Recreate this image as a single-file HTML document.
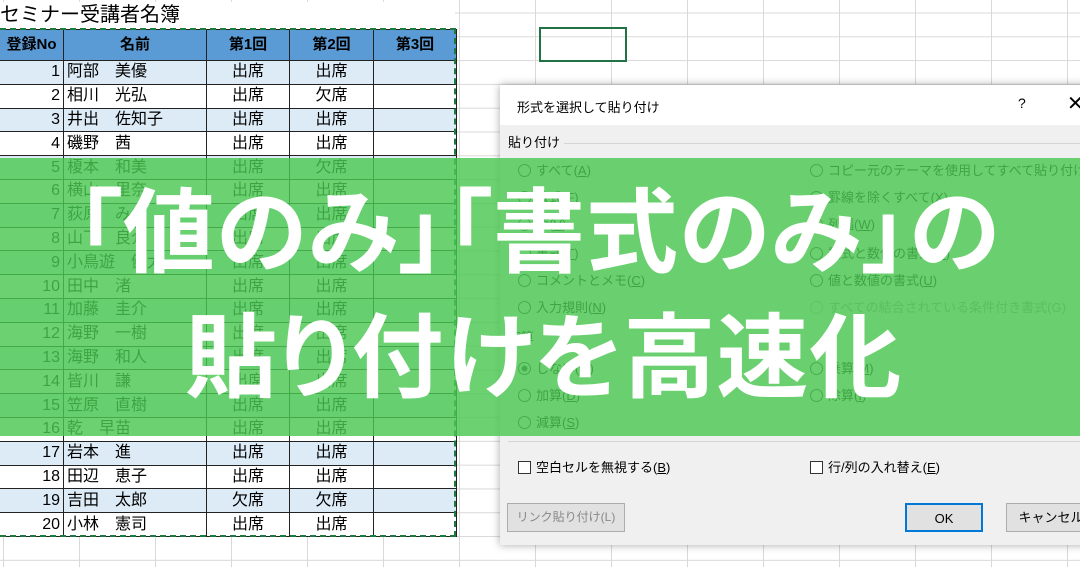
<!DOCTYPE html>
<html><head><meta charset="utf-8"><style>
*{margin:0;padding:0;box-sizing:border-box}
body{width:1080px;height:567px;overflow:hidden;background:#fff;position:relative;font-family:"Liberation Sans","Noto Sans CJK JP",sans-serif}
.grid{position:absolute;left:0;top:0;width:1080px;height:567px;
background-image:linear-gradient(#d9d9d9 1px,transparent 1px),linear-gradient(90deg,#d9d9d9 1px,transparent 1px);
background-size:76px 23.8px,76px 23.8px;background-position:459px 12.5px,459px 0}
.title{position:absolute;left:0;top:2px;font-size:20px;line-height:26px;color:#000;background:#fff;width:455px;height:28px}
table{position:absolute;left:-1px;top:29px;border-collapse:collapse;font-size:16px}
td{border:1.5px solid #222;height:23.8px;padding:0 3px;line-height:20px;white-space:nowrap}
tr.h td{background:#5b9bd5;height:31px;text-align:center;font-weight:bold;font-size:15px}
tr.b td{background:#ddebf7}
tr:not(.h):not(.b) td{background:#fff}
td.n{text-align:right;width:64px}
td.c{text-align:center}
.sel{position:absolute;left:0;top:28px;width:456px;height:509px;border:2px dashed #1e7a3c;border-left:none}
.cell{position:absolute;left:539px;top:27px;width:88px;height:35px;border:2px solid #217346}
.dlg{position:absolute;left:500px;top:85px;width:600px;height:460px;background:#f0f0f0;box-shadow:0 0 8px rgba(0,0,0,.35);font-size:13px;color:#000}
.tb{height:40px;background:#fff;padding:12px 0 0 17px;font-size:13px}
.o{position:absolute;font-size:13px;line-height:16px;white-space:nowrap}
.o i{display:inline-block;width:13px;height:13px;border:1px solid #333;border-radius:50%;vertical-align:-2px;margin-right:5px}
.o b{display:inline-block;width:13px;height:13px;border:1px solid #333;background:#fff;vertical-align:-2px;margin-right:5px}
.btn{position:absolute;top:418px;height:29px;border:1px solid #adadad;background:#e1e1e1;text-align:center;line-height:27px;font-size:13px;white-space:nowrap}
.green{position:absolute;left:0;top:158px;width:1080px;height:278px;background:rgba(76,200,82,.82)}
.big{position:absolute;color:#fff;font-family:"Noto Sans CJK JP",sans-serif;font-weight:700;font-size:92px;line-height:92px;white-space:nowrap;font-feature-settings:"palt"}
</style></head><body>
<div class="grid"></div>
<div class="title">セミナー受講者名簿</div>
<table>
<tr class="h"><td style="width:64px">登録No</td><td style="width:143px">名前</td><td style="width:83px">第1回</td><td style="width:84px">第2回</td><td style="width:83px">第3回</td></tr>
<tr class="b"><td class="n">1</td><td>阿部　美優</td><td class="c">出席</td><td class="c">出席</td><td></td></tr>
<tr><td class="n">2</td><td>相川　光弘</td><td class="c">出席</td><td class="c">欠席</td><td></td></tr>
<tr class="b"><td class="n">3</td><td>井出　佐知子</td><td class="c">出席</td><td class="c">出席</td><td></td></tr>
<tr><td class="n">4</td><td>磯野　茜</td><td class="c">出席</td><td class="c">出席</td><td></td></tr>
<tr class="b"><td class="n">5</td><td>榎本　和美</td><td class="c">出席</td><td class="c">欠席</td><td></td></tr>
<tr><td class="n">6</td><td>横山　里奈</td><td class="c">出席</td><td class="c">出席</td><td></td></tr>
<tr class="b"><td class="n">7</td><td>荻原　みあ</td><td class="c">出席</td><td class="c">出席</td><td></td></tr>
<tr><td class="n">8</td><td>山下　良介</td><td class="c">出席</td><td class="c">出席</td><td></td></tr>
<tr class="b"><td class="n">9</td><td>小鳥遊　健太</td><td class="c">出席</td><td class="c">出席</td><td></td></tr>
<tr><td class="n">10</td><td>田中　渚</td><td class="c">出席</td><td class="c">出席</td><td></td></tr>
<tr class="b"><td class="n">11</td><td>加藤　圭介</td><td class="c">出席</td><td class="c">出席</td><td></td></tr>
<tr><td class="n">12</td><td>海野　一樹</td><td class="c">出席</td><td class="c">出席</td><td></td></tr>
<tr class="b"><td class="n">13</td><td>海野　和人</td><td class="c">出席</td><td class="c">出席</td><td></td></tr>
<tr><td class="n">14</td><td>皆川　謙</td><td class="c">出席</td><td class="c">出席</td><td></td></tr>
<tr class="b"><td class="n">15</td><td>笠原　直樹</td><td class="c">出席</td><td class="c">出席</td><td></td></tr>
<tr><td class="n">16</td><td>乾　早苗</td><td class="c">出席</td><td class="c">出席</td><td></td></tr>
<tr class="b"><td class="n">17</td><td>岩本　進</td><td class="c">出席</td><td class="c">出席</td><td></td></tr>
<tr><td class="n">18</td><td>田辺　恵子</td><td class="c">出席</td><td class="c">出席</td><td></td></tr>
<tr class="b"><td class="n">19</td><td>吉田　太郎</td><td class="c">欠席</td><td class="c">欠席</td><td></td></tr>
<tr><td class="n">20</td><td>小林　憲司</td><td class="c">出席</td><td class="c">出席</td><td></td></tr>
</table>
<div class="sel"></div>
<div class="cell"></div>
<div class="dlg">
<div class="tb">形式を選択して貼り付け<span style="position:absolute;left:518px;top:10px;font-size:14px">?</span><span style="position:absolute;left:567px;top:6px;font-size:20px">✕</span></div>
<div class="o" style="left:8px;top:50px">貼り付け</div>
<div style="position:absolute;left:64px;top:58px;width:520px;border-top:1px solid #d5d5d5"></div>
<div class="o" style="left:18px;top:78px"><i></i>すべて(<u>A</u>)</div>
<div class="o" style="left:18px;top:105px"><i></i>数式(<u>F</u>)</div>
<div class="o" style="left:18px;top:132px"><i></i>値(<u>V</u>)</div>
<div class="o" style="left:18px;top:161px"><i></i>書式(<u>T</u>)</div>
<div class="o" style="left:18px;top:188px"><i></i>コメントとメモ(<u>C</u>)</div>
<div class="o" style="left:18px;top:215px"><i></i>入力規則(<u>N</u>)</div>
<div class="o" style="left:310px;top:78px"><i></i>コピー元のテーマを使用してすべて貼り付け(<u>H</u>)</div>
<div class="o" style="left:310px;top:105px"><i></i>罫線を除くすべて(<u>X</u>)</div>
<div class="o" style="left:310px;top:132px"><i></i>列幅(<u>W</u>)</div>
<div class="o" style="left:310px;top:161px"><i></i>数式と数値の書式(<u>R</u>)</div>
<div class="o" style="left:310px;top:188px"><i></i>値と数値の書式(<u>U</u>)</div>
<div class="o" style="left:310px;top:215px;color:#999"><i style="border-color:#bbb"></i>すべての結合されている条件付き書式(G)</div>
<div class="o" style="left:8px;top:245px">演算</div>
<div class="o" style="left:18px;top:276px"><i style="background:radial-gradient(#333 35%,transparent 40%)"></i>しない(<u>O</u>)</div>
<div class="o" style="left:18px;top:303px"><i></i>加算(<u>D</u>)</div>
<div class="o" style="left:18px;top:330px"><i></i>減算(<u>S</u>)</div>
<div class="o" style="left:310px;top:276px"><i></i>乗算(<u>M</u>)</div>
<div class="o" style="left:310px;top:303px"><i></i>除算(<u>I</u>)</div>
<div style="position:absolute;left:8px;top:356px;width:580px;border-top:1px solid #d5d5d5"></div>
<div class="o" style="left:18px;top:375px"><b></b>空白セルを無視する(<u>B</u>)</div>
<div class="o" style="left:310px;top:375px"><b></b>行/列の入れ替え(<u>E</u>)</div>
<div class="btn" style="left:7px;width:118px;color:#888;font-size:12px">リンク貼り付け(L)</div>
<div class="btn" style="left:405px;width:78px;border:2px solid #0078d7">OK</div>
<div class="btn" style="left:506px;width:90px">キャンセル</div>
</div>
<div class="green"></div>
<div class="big" style="left:76px;top:180px;letter-spacing:1px">「値のみ」「書式のみ」の</div>
<div class="big" style="left:185px;top:305px;letter-spacing:1px">貼り付けを高速化</div>
</body></html>
